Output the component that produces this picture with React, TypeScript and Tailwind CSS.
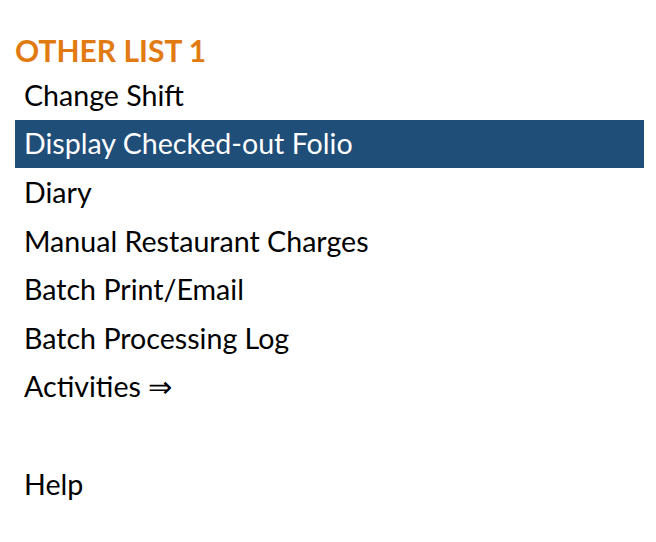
const items = [
  'Change Shift',
  'Display Checked-out Folio',
  'Diary',
  'Manual Restaurant Charges',
  'Batch Print/Email',
  'Batch Processing Log',
  'Activities \u21D2',
  '',
  'Help',
];

export default function App() {
  return (
    <div className="w-[656px] h-[542px] bg-white font-['Lato','Liberation_Sans',sans-serif]">
      <div className="pt-[32px] pl-[15px] pr-[12px]">
        <h2 className="text-[30px] leading-[36px] font-bold text-[#E27A12] mb-[3px]">OTHER LIST 1</h2>
        <ul>
          {items.map((label, i) => (
            <li
              key={i}
              className={
                i === 1
                  ? 'h-[48.6px] flex items-center pl-[9px] text-[28.6px] text-white bg-[#1F4E79]'
                  : 'h-[48.6px] flex items-center pl-[9px] text-[28.6px] text-black'
              }
            >
              {label}
            </li>
          ))}
        </ul>
      </div>
    </div>
  );
}
